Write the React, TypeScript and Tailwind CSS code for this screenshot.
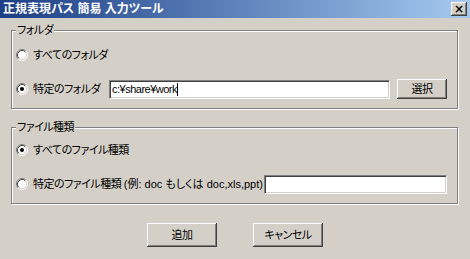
import { JSX } from 'react'

// Win2000-style "regex path" dialog
const face = "font-['Liberation_Sans','Noto_Sans_CJK_JP',sans-serif] [font-feature-settings:'palt']"

const Radio = ({ checked }: { checked: boolean }): JSX.Element => (
  <svg width="12" height="12" viewBox="0 0 12 12" className="shrink-0">
    <circle cx="6" cy="6" r="5" fill="#fff" />
    <path d="M9.89 2.11 A5.5 5.5 0 0 0 2.11 9.89" fill="none" stroke="#808080" />
    <path d="M2.11 9.89 A5.5 5.5 0 0 0 9.89 2.11" fill="none" stroke="#fff" />
    <path d="M9.18 2.82 A4.5 4.5 0 0 0 2.82 9.18" fill="none" stroke="#404040" />
    <path d="M2.82 9.18 A4.5 4.5 0 0 0 9.18 2.82" fill="none" stroke="#d4d0c8" />
    {checked && <circle cx="6" cy="6" r="2" fill="#000" />}
  </svg>
)

const TextBox = ({ value, caret }: { value?: string; caret?: boolean }): JSX.Element => (
  <div className="flex-1 h-[19px] bg-white border border-t-[#808080] border-l-[#808080] border-b-white border-r-white shadow-[inset_1px_1px_0_#404040,inset_-1px_-1px_0_#d4d0c8] flex items-center pl-[2px] text-[11px] leading-none text-black font-['Liberation_Sans',sans-serif]">
    {value}
    {caret && <span className="w-px h-[13px] bg-black" />}
  </div>
)

const Button = ({ label, className }: { label: string; className: string }): JSX.Element => (
  <div
    className={`${className} shrink-0 bg-[#d4d0c8] shadow-[inset_-1px_-1px_0_#404040,inset_1px_1px_0_#fff,inset_-2px_-2px_0_#808080] flex items-center justify-center text-[11px] tracking-[-0.5px] text-black`}
  >
    {label}
  </div>
)

export default function App(): JSX.Element {
  return (
    <div className={`w-[470px] h-[259px] bg-[#d4d0c8] flex flex-col text-black ${face}`}>
      {/* title bar */}
      <div className="h-[18px] bg-gradient-to-r from-[#1d3f85] to-[#a6caf0] flex items-center justify-between pl-[3px] pr-[3px]">
        <span className="text-white font-bold text-[12px] leading-none">正規表現パス 簡易 入力ツール</span>
        <div className="w-[16px] h-[14px] bg-[#d4d0c8] shadow-[inset_-1px_-1px_0_#404040,inset_1px_1px_0_#fff,inset_-2px_-2px_0_#808080] flex items-center justify-center text-[12px] font-bold leading-none font-['DejaVu_Sans',sans-serif]">
          ×
        </div>
      </div>

      {/* folder group */}
      <fieldset className="mt-[5px] ml-[11px] w-[447px] border border-[#808080] shadow-[inset_1px_1px_0_#fff,1px_1px_0_#fff] pl-[4px] pr-[10px] pb-[9px]">
        <legend className="px-[1px] bg-[#d4d0c8] text-[11px] tracking-[-0.5px] leading-[14px]">フォルダ</legend>
        <div className="pt-[8px] flex flex-col gap-[14px] text-[11px] tracking-[-0.5px]">
          <div className="h-[20px] flex items-center gap-[5px]">
            <Radio checked={false} />
            <span className="whitespace-nowrap">すべてのフォルダ</span>
          </div>
          <div className="h-[20px] flex items-center">
            <Radio checked />
            <span className="ml-[5px] w-[76px] shrink-0 whitespace-nowrap">特定のフォルダ</span>
            <TextBox value="c:¥share¥work" caret />
            <Button label="選択" className="ml-[7px] w-[50px] h-[20px]" />
          </div>
        </div>
      </fieldset>

      {/* file type group */}
      <fieldset className="mt-[11px] ml-[11px] w-[447px] border border-[#808080] shadow-[inset_1px_1px_0_#fff,1px_1px_0_#fff] pl-[4px] pr-[10px] pb-[9px]">
        <legend className="px-[1px] bg-[#d4d0c8] text-[11px] tracking-[-0.5px] leading-[14px]">ファイル種類</legend>
        <div className="pt-[6px] flex flex-col gap-[14px] text-[11px] tracking-[-0.5px]">
          <div className="h-[20px] flex items-center gap-[5px]">
            <Radio checked />
            <span className="whitespace-nowrap">すべてのファイル種類</span>
          </div>
          <div className="h-[20px] flex items-center">
            <Radio checked={false} />
            <span className="ml-[5px] w-[231px] shrink-0 whitespace-nowrap">
              特定のファイル種類 <span className="tracking-normal">(例: doc もしくは doc,xls,ppt)</span>
            </span>
            <TextBox />
          </div>
        </div>
      </fieldset>

      {/* action buttons */}
      <div className="mt-[19px] flex justify-center gap-[36px]">
        <Button label="追加" className="w-[70px] h-[24px]" />
        <Button label="キャンセル" className="w-[70px] h-[24px]" />
      </div>
    </div>
  )
}
